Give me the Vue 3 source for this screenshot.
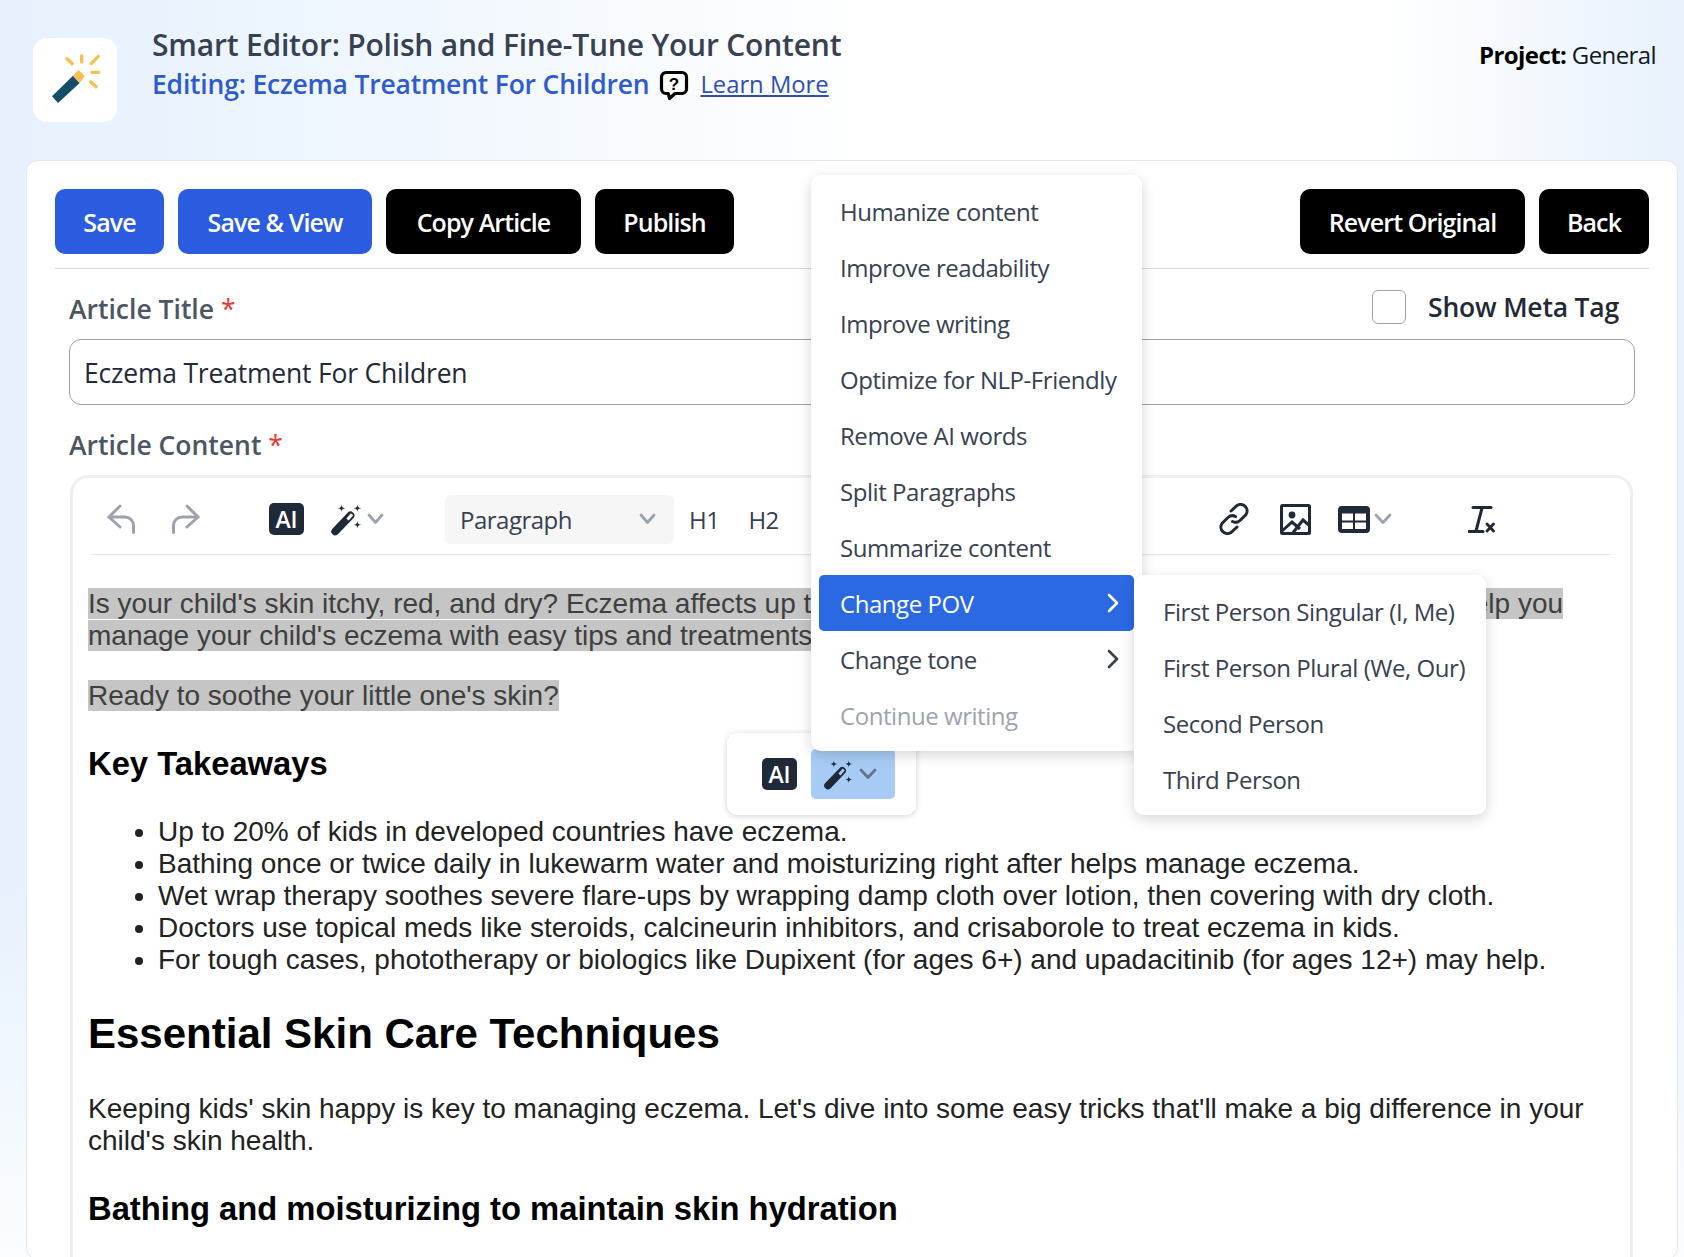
<script setup>
const menu = ['Humanize content','Improve readability','Improve writing','Optimize for NLP-Friendly','Remove AI words','Split Paragraphs','Summarize content']
const sub = ['First Person Singular (I, Me)','First Person Plural (We, Our)','Second Person','Third Person']
const takeaways = [
  'Up to 20% of kids in developed countries have eczema.',
  'Bathing once or twice daily in lukewarm water and moisturizing right after helps manage eczema.',
  'Wet wrap therapy soothes severe flare-ups by wrapping damp cloth over lotion, then covering with dry cloth.',
  'Doctors use topical meds like steroids, calcineurin inhibitors, and crisaborole to treat eczema in kids.',
  'For tough cases, phototherapy or biologics like Dupixent (for ages 6+) and upadacitinib (for ages 12+) may help.'
]
const stars = 'M65 26Q65 38 77 38Q65 38 65 50Q65 38 53 38Q65 38 65 26ZM113 26Q113 38 125 38Q113 38 113 50Q113 38 101 38Q113 38 113 26ZM113 76Q113 88 125 88Q113 88 113 100Q113 88 101 88Q113 88 113 76Z'
</script>

<template>
  <div class="page">
    <header class="head">
      <div class="tile">
        <svg width="84" height="84" viewBox="10 10 252 252">
          <path d="M67 185 L130 123 L150 145 L85 205 Z" fill="#164e68"/>
          <path d="M130 123 L147 105 L165 125 L150 145 Z" fill="#f8bf55"/>
          <g stroke="#f8bf55" stroke-width="10" stroke-linecap="round" fill="none">
            <path d="M112 72 L128 87"/><path d="M156 64 L156 82"/><path d="M206 65 L185 87"/><path d="M187 113 L207 113"/><path d="M183 141 L199 156"/>
          </g>
        </svg>
      </div>
      <div class="titles">
        <h1>Smart Editor: Polish and Fine-Tune Your Content</h1>
        <div class="sub">
          <span class="editing">Editing: Eczema Treatment For Children</span>
          <svg class="help" width="30" height="32" viewBox="0 0 30 32">
            <path d="M7 2.5h16a4.5 4.5 0 0 1 4.5 4.5v12a4.5 4.5 0 0 1-4.5 4.5h-7l-5.5 5-1.2-5H7a4.5 4.5 0 0 1-4.5-4.5V7A4.5 4.5 0 0 1 7 2.5z" fill="#fff" stroke="#000" stroke-width="3.2" stroke-linejoin="round"/>
            <text x="15" y="19.5" text-anchor="middle" font-size="17" font-weight="700" fill="#000" font-family="Liberation Sans, sans-serif">?</text>
          </svg>
          <a class="learn">Learn More</a>
        </div>
      </div>
      <div class="project"><b>Project:</b> General</div>
    </header>

    <main class="card">
      <div class="actions">
        <div class="group">
          <button class="btn blue w-save">Save</button>
          <button class="btn blue w-view">Save &amp; View</button>
          <button class="btn w-copy">Copy Article</button>
          <button class="btn w-pub">Publish</button>
        </div>
        <div class="group">
          <button class="btn w-rev">Revert Original</button>
          <button class="btn w-back">Back</button>
        </div>
      </div>

      <div class="form">
        <div class="label-row">
          <label class="label">Article Title <i>*</i></label>
          <div class="meta"><span class="check"></span><span class="meta-text">Show Meta Tag</span></div>
        </div>
        <div class="input">Eczema Treatment For Children</div>
        <label class="label second">Article Content <i>*</i></label>

        <div class="editor">
          <div class="toolbar">
            <div class="tools left">
              <svg width="28" height="30" viewBox="0 0 28 30" fill="none" stroke="#9ca3af" stroke-width="3" stroke-linecap="round" stroke-linejoin="round"><path d="M13 2 L2 13 L13 23"/><path d="M2 13 H18 a8.5 8.5 0 0 1 8.5 8.5 v7"/></svg>
              <svg class="redo" width="30" height="30" viewBox="0 0 30 30" fill="none" stroke="#9ca3af" stroke-width="3" stroke-linecap="round" stroke-linejoin="round"><path d="M17 2 L28 13 L17 23"/><path d="M28 13 H12 a8.5 8.5 0 0 0-8.5 8.5 v7"/></svg>
              <span class="ai bar-ai">AI</span>
              <svg class="wand" width="33" height="33" viewBox="30 22 100 100"><path :d="stars" fill="#1f2937"/><path d="M46 108 L92 60" stroke="#1f2937" stroke-width="24" stroke-linecap="round"/><path d="M83 72 L97 56" stroke="#fff" stroke-width="9" stroke-linecap="butt"/></svg>
              <svg class="chev" width="17" height="12" viewBox="0 0 17 12" fill="none" stroke="#9ca3af" stroke-width="2.8" stroke-linecap="round" stroke-linejoin="round"><path d="M2 2 L8.5 9.5 L15 2"/></svg>
              <div class="para"><span>Paragraph</span><svg width="17" height="12" viewBox="0 0 17 12" fill="none" stroke="#9ca3af" stroke-width="2.8" stroke-linecap="round" stroke-linejoin="round"><path d="M2 2 L8.5 9.5 L15 2"/></svg></div>
              <span class="hx h1x">H1</span>
              <span class="hx h2x">H2</span>
            </div>
            <div class="tools right">
              <svg width="30" height="32" viewBox="2 1 30 32" fill="none" stroke="#1f2937" stroke-width="3" stroke-linecap="round"><path d="M14 9 l6-5.5 a6.5 6.5 0 0 1 9 9 l-6 6 a6.5 6.5 0 0 1-7.5 1"/><path d="M20 25 l-6 5.5 a6.5 6.5 0 0 1-9-9 l6-6 a6.5 6.5 0 0 1 7.5-1"/></svg>
              <svg class="img" width="31" height="31" viewBox="0 0 31 31" fill="none" stroke="#1f2937" stroke-width="3"><rect x="1.5" y="1.5" width="28" height="28" rx="1"/><circle cx="12" cy="11" r="3.4" fill="#1f2937" stroke="none"/><path d="M2 27 L12 18 L20 25"/><path d="M12 30 L23 16 L30 22"/></svg>
              <svg class="tbl" width="32" height="27" viewBox="0 0 32 27"><rect width="32" height="27" rx="4" fill="#1f2937"/><rect x="4" y="7.5" width="11" height="7" fill="#fff"/><rect x="17" y="7.5" width="11" height="7" fill="#fff"/><rect x="4" y="16.5" width="11" height="6.5" fill="#fff"/><rect x="17" y="16.5" width="11" height="6.5" fill="#fff"/></svg>
              <svg class="chev" width="18" height="12" viewBox="0 0 18 12" fill="none" stroke="#9ca3af" stroke-width="2.8" stroke-linecap="round" stroke-linejoin="round"><path d="M2 2 L9 9.5 L16 2"/></svg>
              <svg class="clear" width="27" height="27" viewBox="0 0 27 27" fill="none" stroke="#1f2937" stroke-linecap="round"><path d="M5 1.5 H23" stroke-width="3"/><path d="M14 2 L8 25" stroke-width="3"/><path d="M1 25.5 H15" stroke-width="3"/><path d="M19 18 L25.5 25 M25.5 18 L19 25" stroke-width="2.8"/></svg>
            </div>
          </div>

          <article class="content">
            <p><mark>Is your child's skin itchy, red, and dry? Eczema affects up to 20% of kids in developed countries, but we aim to help you manage your child's eczema with easy tips and treatments.</mark></p>
            <p><mark>Ready to soothe your little one's skin?</mark></p>
            <h3>Key Takeaways</h3>
            <ul>
              <li v-for="t in takeaways" :key="t">{{ t }}</li>
            </ul>
            <h2>Essential Skin Care Techniques</h2>
            <p>Keeping kids' skin happy is key to managing eczema. Let's dive into some easy tricks that'll make a big difference in your child's skin health.</p>
            <h3>Bathing and moisturizing to maintain skin hydration</h3>
          </article>
        </div>
      </div>
    </main>

    <div class="float">
      <span class="ai">AI</span>
      <span class="wand-on">
        <svg width="31" height="31" viewBox="30 22 100 100"><path :d="stars" fill="#1f2937"/><path d="M46 108 L92 60" stroke="#1f2937" stroke-width="24" stroke-linecap="round"/><path d="M83 72 L97 56" stroke="#a8cbf5" stroke-width="9"/></svg>
        <svg width="18" height="12" viewBox="0 0 18 12" fill="none" stroke="#64748b" stroke-width="2.8" stroke-linecap="round" stroke-linejoin="round"><path d="M2 2 L9 9.5 L16 2"/></svg>
      </span>
    </div>

    <div class="menu">
      <div class="item" v-for="m in menu" :key="m">{{ m }}</div>
      <div class="item active">Change POV<svg width="14" height="20" viewBox="0 0 14 20" fill="none" stroke="currentColor" stroke-width="2.6" stroke-linecap="round" stroke-linejoin="round"><path d="M3 2 L11 10 L3 18"/></svg></div>
      <div class="item">Change tone<svg width="14" height="20" viewBox="0 0 14 20" fill="none" stroke="currentColor" stroke-width="2.6" stroke-linecap="round" stroke-linejoin="round"><path d="M3 2 L11 10 L3 18"/></svg></div>
      <div class="item muted">Continue writing</div>
    </div>

    <div class="submenu">
      <div class="item" v-for="s in sub" :key="s">{{ s }}</div>
    </div>
  </div>
</template>

<style>
html, body { margin: 0; padding: 0; overflow: hidden; }
</style>

<style scoped>
.page {
  position: relative;
  width: 1684px;
  height: 1257px;
  overflow: hidden;
  font-family: "Open Sans", "Noto Sans", sans-serif;
  background:
    linear-gradient(to top, #fbfdff 0, rgba(251,253,255,0) 30%),
    linear-gradient(90deg, #e6f1fd 0%, #f2f8fe 28%, #fff 52%, #fff 82%, #e8f1fc 100%);
}
.head {
  height: 161px;
  box-sizing: border-box;
  padding: 24px 28px 0 33px;
  display: flex;
  align-items: flex-start;
}
.tile {
  width: 84px;
  height: 84px;
  margin-top: 14px;
  background: #fff;
  border-radius: 14px;
}
.titles { margin-left: 35px; flex: 1; }
h1 {
  margin: 0;
  font-size: 30px;
  line-height: 42px;
  font-weight: 600;
  letter-spacing: -.2px;
  color: #374151;
}
.sub { display: flex; align-items: center; height: 36px; }
.editing { font-size: 26.5px; font-weight: 600; letter-spacing: -.2px; color: #2f5bd0; }
.help { margin-left: 10px; margin-top: 4px; }
.learn { margin-left: 11px; font-size: 23.8px; color: #2f4fb5; text-decoration: underline; }
.project { font-size: 24px; letter-spacing: -.6px; color: #111827; margin-top: 14px; }
.project b { font-weight: 700; color: #000; }

.card {
  margin-left: 26px;
  margin-top: -1px;
  width: 1652px;
  height: 1100px;
  background: #fff;
  border-radius: 12px;
  box-sizing: border-box;
  padding: 28px 28px 0 28px;
  border: 1px solid #e5e7eb;
}
.actions {
  display: flex;
  justify-content: space-between;
  padding-bottom: 14px;
  border-bottom: 1px solid #d4d7dc;
}
.group { display: flex; gap: 14px; }
.btn {
  height: 65px;
  padding: 0;
  background: #000;
  color: #fff;
  border: 0;
  border-radius: 10px;
  letter-spacing: -.9px;
  font: 600 25px "Open Sans", sans-serif;
}
.blue { background: #2b5ce0; }
.w-save { width: 109px; }
.w-view { width: 194px; }
.w-copy { width: 195px; }
.w-pub { width: 139px; }
.w-rev { width: 225px; }
.w-back { width: 110px; }
.form { padding: 0 14px; }
.label-row { display: flex; justify-content: space-between; align-items: center; height: 70px; padding-right: 16px; }
.label { font-size: 26.5px; font-weight: 600; color: #4b5563; }
.label-row .label { padding-top: 10px; }
.label i { color: #e53935; font-style: normal; font-weight: 400; }
.second { display: block; margin-top: 22px; line-height: 36px; }
.meta { display: flex; align-items: center; padding-top: 6px; }
.check { width: 34px; height: 34px; box-sizing: border-box; border: 1px solid #9ca3af; border-radius: 6px; }
.meta-text { margin-left: 22px; font-size: 26.5px; font-weight: 600; letter-spacing: -.2px; color: #1f2937; margin-top: -1px; }
.input {
  height: 66px;
  box-sizing: border-box;
  border: 1px solid #9ca3af;
  border-radius: 12px;
  padding: 1px 14px 0;
  display: flex;
  align-items: center;
  font-size: 26.5px;
  letter-spacing: -.2px;
  color: #1f2937;
}
.editor {
  margin-top: 12px;
  margin-left: 1px;
  width: 1563px;
  height: 800px;
  box-sizing: border-box;
  border: 3px solid #eeeff1;
  border-radius: 18px;
  padding-right: 19px;
}
.toolbar {
  display: flex;
  justify-content: space-between;
  height: 77px;
  padding-top: 6px;
  margin-left: 19px;
  box-sizing: border-box;
  border-bottom: 1px solid #e3e5e8;
  align-items: center;
  box-shadow: 0 2px 3px -2px rgba(0,0,0,.08);
}
.tools { display: flex; align-items: center; }
.left { margin-left: 15px; }
.redo { margin-left: 35px; }
.ai {
  display: inline-flex;
  align-items: center;
  justify-content: center;
  width: 35px;
  height: 32px;
  background: #1f2937;
  color: #fff;
  border-radius: 5px;
  font: 600 23px "Open Sans", sans-serif;
}
.bar-ai { margin-left: 69px; }
.wand { margin-left: 26px; }
.chev { margin-left: 4px; }
.para {
  margin-left: 61px;
  width: 229px;
  height: 49px;
  box-sizing: border-box;
  padding: 0 18px 0 15px;
  background: #f6f6f7;
  border-radius: 6px;
  display: flex;
  align-items: center;
  justify-content: space-between;
  font-size: 24px;
  letter-spacing: -.5px;
  color: #374151;
}
.hx { font-size: 24px; letter-spacing: -.5px; color: #374151; }
.h1x { margin-left: 15px; }
.h2x { margin-left: 29px; }
.right { margin-right: 116px; }
.img { margin-left: 31px; }
.tbl { margin-left: 27px; }
.clear { margin-left: 76px; }

.content {
  margin-left: 15px;
  padding-top: 33px;
  font-family: "Liberation Sans", Arial, sans-serif;
  font-size: 28px;
  color: #222;
}
.content p { margin: 0 0 28px; }
mark { background: #c5c5c5; color: #3f3f3f; }
.content h3 { margin: 32.76px 0; font-size: 32.76px; font-weight: 700; color: #000; }
.content ul { margin: 32.76px 0 0; padding-left: 70px; }
.content h2 { margin: 34.86px 0; font-size: 42px; font-weight: 700; color: #000; }

.float {
  position: absolute;
  left: 727px;
  top: 733px;
  width: 189px;
  height: 82px;
  box-sizing: border-box;
  background: #fff;
  border-radius: 10px;
  box-shadow: 0 1px 6px rgba(0,0,0,.18);
  display: flex;
  align-items: center;
  padding-left: 35px;
  gap: 14px;
}
.wand-on {
  width: 84px;
  height: 50px;
  background: #a8cbf5;
  border-radius: 5px;
  display: flex;
  align-items: center;
  padding-left: 12px;
  box-sizing: border-box;
  gap: 5px;
}

.menu, .submenu {
  position: absolute;
  background: #fff;
  border-radius: 10px;
  box-shadow: 0 4px 14px rgba(0,0,0,.16);
  box-sizing: border-box;
  font-size: 24px;
  letter-spacing: -.45px;
  color: #374151;
}
.menu {
  left: 811px;
  top: 175px;
  width: 331px;
  height: 576px;
  padding: 8px;
}
.submenu {
  left: 1134px;
  top: 575px;
  width: 352px;
  height: 240px;
  padding: 8px 0;
}
.item {
  height: 56px;
  display: flex;
  align-items: center;
  justify-content: space-between;
  padding: 0 14px 0 21px;
  white-space: nowrap;
}
.submenu .item { padding-left: 29px; }
.menu .item { width: 315px; box-sizing: border-box; }
.active { background: #2b69e3; color: #fff; border-radius: 5px; }
.muted { color: #9ca3af; }
</style>
